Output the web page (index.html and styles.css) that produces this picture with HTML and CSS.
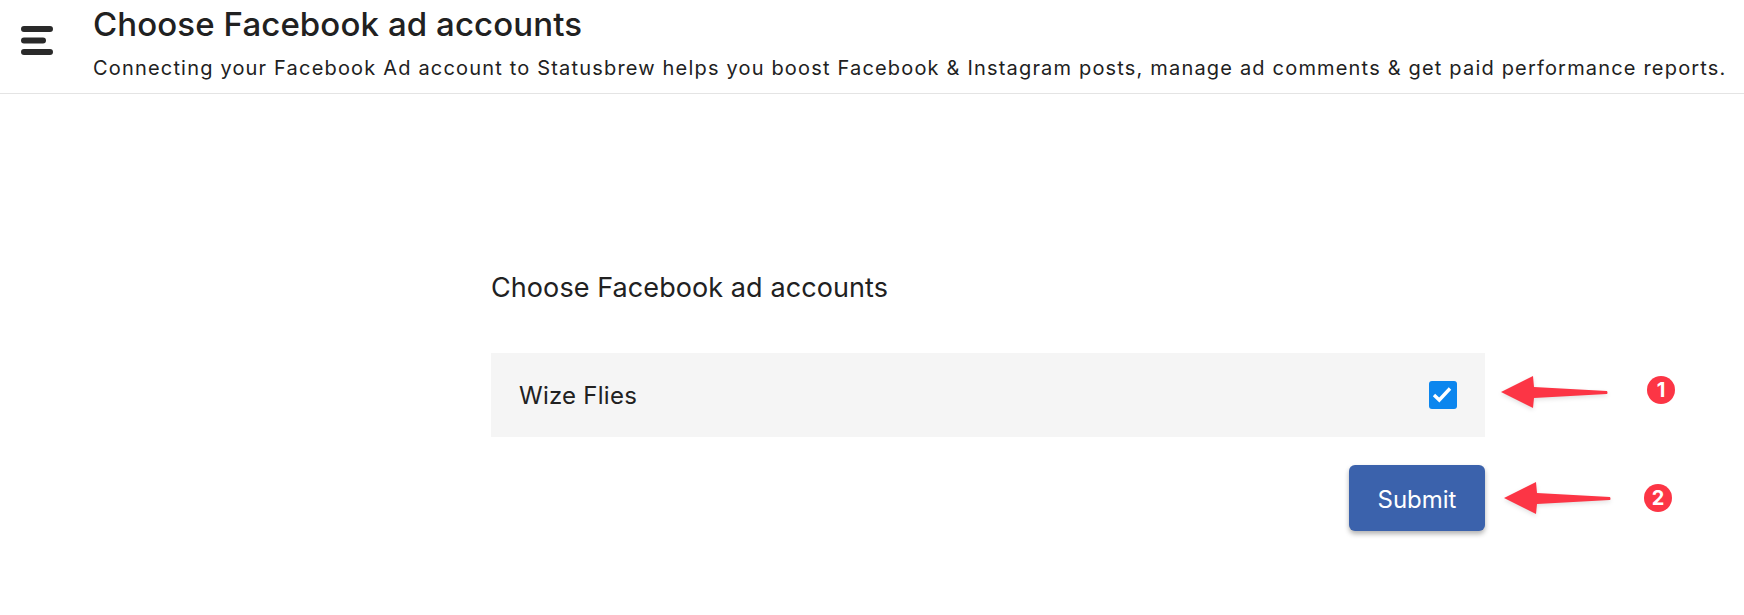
FILE: index.html
```html
<!DOCTYPE html>
<html lang="en">
  <head>
    <meta charset="UTF-8" />
    <title>Choose Facebook ad accounts</title>
    <link rel="stylesheet" href="styles.css">
  </head>
  <body>
    <header class="top-bar">
      <button class="menu-btn" aria-label="Menu">
        <svg width="32" height="29" viewBox="0 0 32 29">
          <path d="M3 3H29M3 14.5H22M3 26H29" stroke="#2a2a2a" stroke-width="6" stroke-linecap="round" fill="none" />
        </svg>
      </button>
      <div class="top-text">
        <h1>Choose Facebook ad accounts</h1>
        <p>Connecting your Facebook Ad account to Statusbrew helps you boost Facebook &amp; Instagram posts, manage ad comments &amp; get paid performance reports.</p>
      </div>
    </header>

    <main class="content">
      <h2>Choose Facebook ad accounts</h2>
      <div class="account-row">
        <span>Wize Flies</span>
        <span class="checkbox">
          <svg width="22" height="22" viewBox="0 0 22 22">
            <path d="M2 11L7.3 16L18 4.5" stroke="#fff" stroke-width="3.4" fill="none" />
          </svg>
        </span>
      </div>
      <div class="actions">
        <button class="submit-btn">Submit</button>
      </div>
    </main>

    <!-- annotations on top of the screenshot -->
    <svg class="arrow arrow-one" width="110" height="36" viewBox="0 0 110 36">
      <path d="M1 18L33 2L34 13L107 17Q108 19 107 20L34 24L33 34Z" fill="#fc3545" />
    </svg>
    <span class="marker marker-one">1</span>
    <svg class="arrow arrow-two" width="110" height="36" viewBox="0 0 110 36">
      <path d="M1 18L33 2L34 13L107 17Q108 19 107 20L34 24L33 34Z" fill="#fc3545" />
    </svg>
    <span class="marker marker-two">2</span>
  </body>
</html>
```

FILE: styles.css
```css
* {
  margin: 0;
  padding: 0;
  box-sizing: border-box;
}

body {
  position: relative;
  height: 615px;
  overflow: hidden;
  background: #fff;
  color: #212121;
  font-family: Inter, "Liberation Sans", sans-serif;
}

.top-bar {
  display: flex;
  height: 94px;
  padding-left: 21px;
  border-bottom: 1px solid #e4e4e4;
}

.menu-btn {
  align-self: flex-start;
  margin-top: 26px;
  margin-right: 40px;
  background: none;
  border: none;
  line-height: 0;
}

.top-text h1 {
  font-size: 33px;
  font-weight: 500;
  line-height: 38px;
  margin-top: 5px;
  letter-spacing: 0.1px;
}

.top-text p {
  font-size: 20px;
  line-height: 24px;
  margin-top: 13px;
  letter-spacing: 1.18px;
  white-space: nowrap;
}

.content {
  width: 994px;
  margin-left: 491px;
  padding-top: 177px;
}

.content h2 {
  font-size: 27px;
  font-weight: 400;
  line-height: 34px;
  letter-spacing: 0.08px;
}

.account-row {
  display: flex;
  align-items: center;
  justify-content: space-between;
  height: 84px;
  margin-top: 48px;
  padding: 0 28px;
  background: #f5f5f5;
  font-size: 24px;
  letter-spacing: 0.25px;
}

.checkbox {
  display: flex;
  align-items: center;
  justify-content: center;
  width: 28px;
  height: 28px;
  background: #0c86ee;
  border-radius: 3px;
}

.actions {
  display: flex;
  justify-content: flex-end;
  margin-top: 28px;
}

.submit-btn {
  width: 136px;
  height: 66px;
  padding-top: 2px;
  background: #3b62ac;
  color: #fff;
  border: none;
  border-radius: 6px;
  font-family: inherit;
  font-size: 24px;
  font-weight: 400;
  box-shadow: 0 3px 5px rgba(0, 0, 0, 0.3);
}

.arrow {
  position: absolute;
  filter: drop-shadow(0 2px 2px rgba(0, 0, 0, 0.12));
}

.arrow-one {
  left: 1500px;
  top: 374px;
}

.arrow-two {
  left: 1503px;
  top: 480px;
}

.marker {
  position: absolute;
  display: flex;
  align-items: center;
  justify-content: center;
  width: 28px;
  height: 28px;
  background: #fc3545;
  color: #fff;
  border-radius: 50%;
  font-size: 20px;
  font-weight: 700;
}

.marker-one {
  left: 1647px;
  top: 376px;
}

.marker-two {
  left: 1644px;
  top: 484px;
}
```
